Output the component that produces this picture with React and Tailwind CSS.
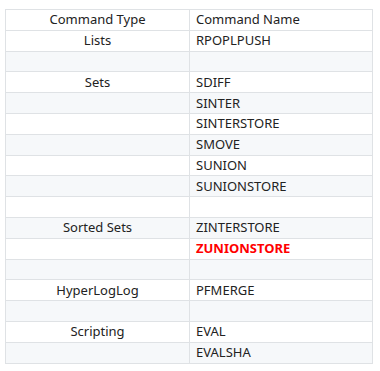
import React from 'react';

const rows = [
  ['Lists', 'RPOPLPUSH'],
  ['', ''],
  ['Sets', 'SDIFF'],
  ['', 'SINTER'],
  ['', 'SINTERSTORE'],
  ['', 'SMOVE'],
  ['', 'SUNION'],
  ['', 'SUNIONSTORE'],
  ['', ''],
  ['Sorted Sets', 'ZINTERSTORE'],
  ['', 'ZUNIONSTORE', true],
  ['', ''],
  ['HyperLogLog', 'PFMERGE'],
  ['', ''],
  ['Scripting', 'EVAL'],
  ['', 'EVALSHA'],
];

export default function App() {
  return (
    <div className="bg-white pl-[5px] pt-[9px] font-['Noto_Sans','Noto_Sans_CJK_SC',sans-serif] text-[13px] text-[#222]">
      <table className="w-[368px] table-fixed border-collapse">
        <thead>
          <tr className="h-[20.8px]">
            <th className="w-[184px] border border-[#dfe2e5] p-0 text-center font-normal leading-[19px]">Command Type</th>
            <th className="border border-[#dfe2e5] p-0 pl-[6px] text-left font-normal leading-[19px]">Command Name</th>
          </tr>
        </thead>
        <tbody>
          {rows.map(([type, name, hot], i) => (
            <tr key={i} className={`h-[20.8px] ${i % 2 === 1 ? 'bg-[#f6f8fa]' : 'bg-white'}`}>
              <td className="border border-[#dfe2e5] p-0 text-center leading-[19px]">{type}</td>
              <td className={`border border-[#dfe2e5] p-0 pl-[6px] leading-[19px] ${hot ? 'font-bold text-[#ff0000]' : ''}`}>
                {name}
              </td>
            </tr>
          ))}
        </tbody>
      </table>
    </div>
  );
}
